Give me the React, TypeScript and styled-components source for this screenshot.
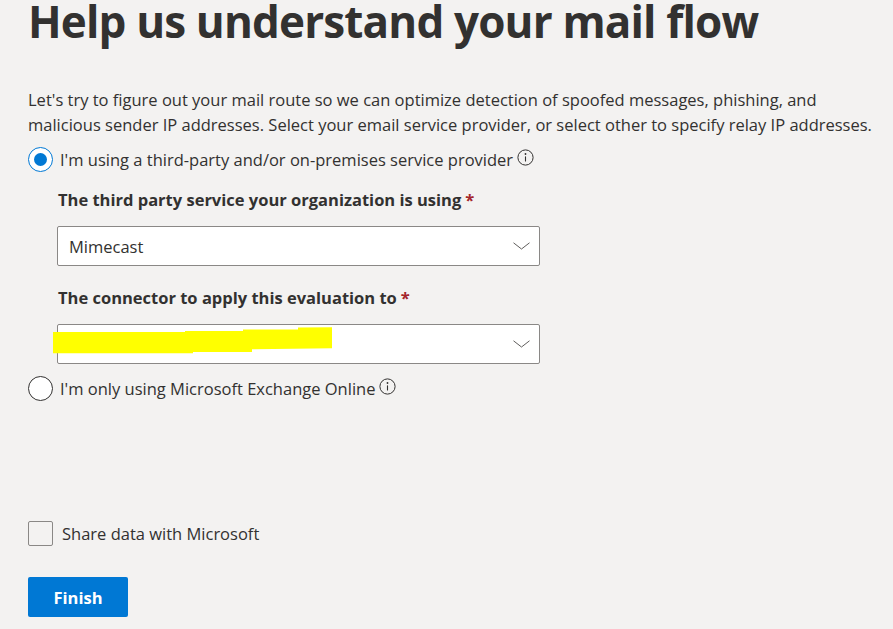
import React from "react";
import styled, { createGlobalStyle } from "styled-components";

const GlobalStyle = createGlobalStyle`
  body {
    margin: 0;
    background: #f3f2f1;
    font-family: "Open Sans", "Noto Sans", sans-serif;
    color: #323130;
    overflow: hidden;
  }
`;

const Page = styled.div`
  padding: 0 0 0 28px;
  width: 893px;
  height: 629px;
  box-sizing: border-box;
`;

const Title = styled.h1`
  margin: -1px 0 0 0;
  font-size: 44px;
  line-height: 1;
  font-weight: 700;
  color: #323130;
  letter-spacing: -0.84px;
  white-space: nowrap;
`;

const Intro = styled.p`
  margin: 44px 0 0 0;
  font-size: 16.5px;
  line-height: 25px;
  color: #323130;
`;

const ChoiceRow = styled.label<{ $gapTop: number }>`
  display: flex;
  align-items: center;
  margin-top: ${(p) => p.$gapTop}px;
  height: 25px;
  font-size: 16.5px;
  cursor: pointer;
`;

const RadioCircle = styled.span<{ $checked?: boolean }>`
  box-sizing: border-box;
  width: 25px;
  height: 25px;
  border-radius: 50%;
  border: 1px solid ${(p) => (p.$checked ? "#0078d4" : "#323130")};
  background: #fff;
  display: flex;
  align-items: center;
  justify-content: center;
  margin-right: 7px;
  flex-shrink: 0;

  &::after {
    content: "";
    width: 13px;
    height: 13px;
    border-radius: 50%;
    background: ${(p) => (p.$checked ? "#0078d4" : "transparent")};
  }
`;

const InfoWrap = styled.span`
  display: inline-flex;
  margin-left: 4px;
  position: relative;
  top: -2px;
`;

const Nested = styled.div`
  padding-left: 29px;
`;

const FieldLabel = styled.div<{ $gapTop: number }>`
  margin-top: ${(p) => p.$gapTop}px;
  font-size: 16.5px;
  line-height: 25px;
  font-weight: 700;
  padding-left: 1px;
`;

const Required = styled.span`
  color: #a4262c;
  margin-left: 4px;
`;

const Dropdown = styled.div<{ $gapTop: number }>`
  position: relative;
  box-sizing: border-box;
  margin-top: ${(p) => p.$gapTop}px;
  width: 483px;
  height: 40px;
  border: 1.25px solid #8a8886;
  border-radius: 2px;
  background: #fff;
  display: flex;
  align-items: center;
  justify-content: space-between;
  padding: 0 9px 0 11px;
  font-size: 16.5px;
  color: #323130;
`;

const Redaction = styled.svg`
  position: absolute;
  left: -5px;
  top: 1px;
`;

const CheckRow = styled.label`
  display: flex;
  align-items: center;
  margin-top: 120px;
  height: 25px;
  font-size: 16.5px;
  color: #323130;
`;

const CheckBox = styled.span`
  box-sizing: border-box;
  width: 25px;
  height: 25px;
  border: 1.25px solid #8a8886;
  border-radius: 2px;
  margin-right: 9px;
`;

const PrimaryButton = styled.button`
  margin-top: 31px;
  width: 100px;
  height: 40px;
  border: none;
  border-radius: 2px;
  background: #0078d4;
  color: #fff;
  font-family: inherit;
  font-size: 16.5px;
  font-weight: 700;
  cursor: pointer;
`;

const Chevron = () => (
  <svg width="17" height="8" viewBox="0 0 17 8">
    <path d="M0.5 0.8 L8.5 7 L16.5 0.8" fill="none" stroke="#605e5c" strokeWidth="1" />
  </svg>
);

const InfoIcon = () => (
  <svg width="17" height="17" viewBox="0 0 17 17">
    <circle cx="8.5" cy="8.5" r="7.6" fill="none" stroke="#323130" strokeWidth="1" />
    <circle cx="8.5" cy="5" r="0.9" fill="#323130" />
    <path d="M8.5 7.4 V12.5" stroke="#323130" strokeWidth="1.1" />
  </svg>
);

export default function App() {
  return (
    <Page>
      <GlobalStyle />
      <Title>Help us understand your mail flow</Title>
      <Intro>
        Let's try to figure out your mail route so we can optimize detection of spoofed messages, phishing, and
        <br />
        malicious sender IP addresses. Select your email service provider, or select other to specify relay IP addresses.
      </Intro>

      <ChoiceRow $gapTop={10}>
        <RadioCircle $checked />
        I'm using a third-party and/or on-premises service provider
        <InfoWrap>
          <InfoIcon />
        </InfoWrap>
      </ChoiceRow>

      <Nested>
        <FieldLabel $gapTop={15}>
          The third party service your organization is using<Required>*</Required>
        </FieldLabel>
        <Dropdown $gapTop={14}>
          <span>Mimecast</span>
          <Chevron />
        </Dropdown>

        <FieldLabel $gapTop={19}>
          The connector to apply this evaluation to<Required>*</Required>
        </FieldLabel>
        <Dropdown $gapTop={14}>
          <span />
          <Chevron />
          <Redaction width="280" height="28" viewBox="0 0 280 28">
            <polygon
              fill="#ffff00"
              points="0,6 132,6 132,5 190,5 190,3.5 245,3.5 245,1.5 279,1.2 279,22.3 199,23.3 199,26 140,26 140,27.3 0,27.3"
            />
          </Redaction>
        </Dropdown>
      </Nested>

      <ChoiceRow $gapTop={12}>
        <RadioCircle />
        I'm only using Microsoft Exchange Online
        <InfoWrap>
          <InfoIcon />
        </InfoWrap>
      </ChoiceRow>

      <CheckRow>
        <CheckBox />
        Share data with Microsoft
      </CheckRow>

      <PrimaryButton>Finish</PrimaryButton>
    </Page>
  );
}
